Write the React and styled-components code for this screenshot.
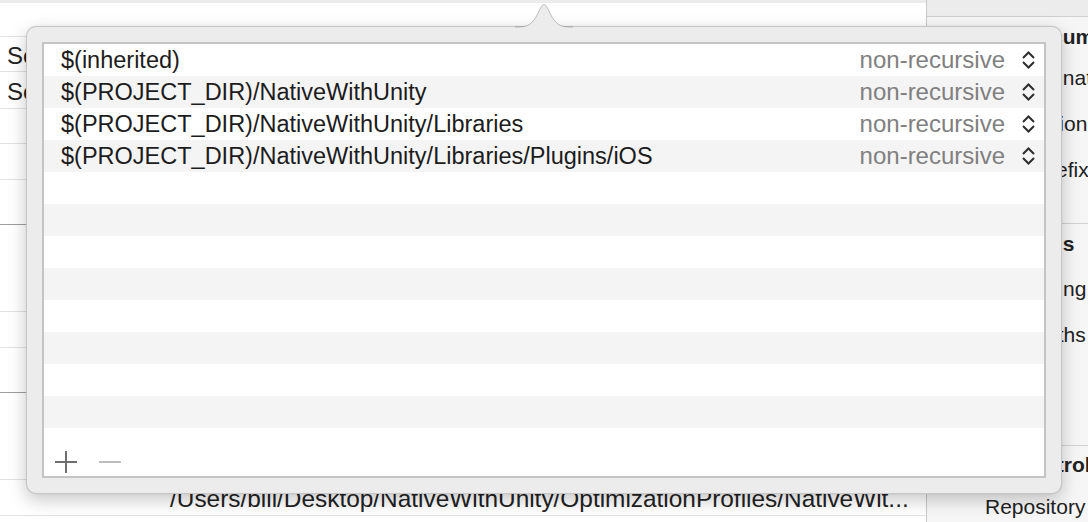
import React from "react";
import styled, { createGlobalStyle } from "styled-components";

const GlobalStyle = createGlobalStyle`
  html, body {
    margin: 0;
    padding: 0;
    width: 1088px;
    height: 522px;
    overflow: hidden;
    background: #ffffff;
    font-family: "Liberation Sans", Arial, sans-serif;
  }
`;

const Page = styled.div`
  position: relative;
  width: 1088px;
  height: 522px;
  display: grid;
  grid-template-columns: 927px 161px;
  overflow: hidden;
`;

const Editor = styled.div`
  display: flex;
  flex-direction: column;
  background: #ffffff;
  border-right: 1px solid #c8c8c8;
`;

const TopStrip = styled.div`
  height: 3px;
  background: #ececec;
  flex-shrink: 0;
`;

const EditorRow = styled.div`
  height: ${(p) => p.h}px;
  flex-shrink: 0;
  display: flex;
  align-items: center;
  box-sizing: border-box;
  border-bottom: 1px solid ${(p) => (p.dark ? "#9e9e9e" : "#e2e2e2")};
  font-size: ${(p) => (p.wide ? 24.4 : 24)}px;
  color: #222222;
`;

const RowLabel = styled.span`
  padding-left: ${(p) => p.indent}px;
  padding-top: 3px;
  white-space: nowrap;
`;

const Inspector = styled.div`
  display: flex;
  flex-direction: column;
  background: #f6f6f6;
  width: 200px;
`;

const InspectorTop = styled.div`
  height: 16px;
  flex-shrink: 0;
  background: #ececec;
  border-bottom: 1px solid #cfcfcf;
`;

const Section = styled.div`
  height: ${(p) => p.h}px;
  flex-shrink: 0;
  box-sizing: border-box;
  border-bottom: ${(p) => (p.last ? "none" : "1px solid #d2d2d2")};
  display: flex;
  flex-direction: column;
`;

const InspectorRow = styled.div`
  height: ${(p) => p.h}px;
  flex-shrink: 0;
  display: flex;
  align-items: center;
  padding-left: ${(p) => p.indent - 927}px;
  font-size: 21px;
  font-weight: ${(p) => (p.bold ? 700 : 400)};
  color: #222222;
  white-space: nowrap;
`;

const Popover = styled.div`
  position: absolute;
  left: 26px;
  top: 26px;
  width: 1036px;
  height: 468px;
  box-sizing: border-box;
  padding: 15px;
  background: #ececec;
  border: 1px solid rgba(0, 0, 0, 0.16);
  border-radius: 10px;
  box-shadow: 0 6px 18px rgba(0, 0, 0, 0.22), 0 0 2px rgba(0, 0, 0, 0.08);
`;

const Arrow = styled.svg`
  position: absolute;
  left: 488px;
  top: -25px;
  width: 58px;
  height: 27px;
  overflow: visible;
`;

const Table = styled.div`
  height: 100%;
  box-sizing: border-box;
  border: 2px solid #c4c4c4;
  background: #ffffff;
  display: flex;
  flex-direction: column;
`;

const PathRow = styled.div`
  height: 32px;
  flex-shrink: 0;
  display: flex;
  align-items: center;
  padding: 0 8px 0 17px;
  background: ${(p) => (p.odd ? "#f4f4f4" : "#ffffff")};
  font-size: 24px;
`;

const PathText = styled.span`
  flex: 1;
  font-size: 23.5px;
  color: #1c1c1c;
  white-space: nowrap;
`;

const Mode = styled.span`
  color: #808080;
  margin-right: 16px;
`;

const Footer = styled.div`
  flex: 1;
  display: flex;
  align-items: flex-end;
  gap: 22px;
  padding: 0 0 3px 11px;
`;

const IconButton = styled.svg`
  width: 22px;
  height: 22px;
  display: block;
`;

const UpDown = () => (
  <svg width="15" height="18" viewBox="0 0 15 18">
    <path d="M2 7 L7.5 1.5 L13 7" fill="none" stroke="#2e2e2e" strokeWidth="2" />
    <path d="M2 11 L7.5 16.5 L13 11" fill="none" stroke="#2e2e2e" strokeWidth="2" />
  </svg>
);

const paths = [
  "$(inherited)",
  "$(PROJECT_DIR)/NativeWithUnity",
  "$(PROJECT_DIR)/NativeWithUnity/Libraries",
  "$(PROJECT_DIR)/NativeWithUnity/Libraries/Plugins/iOS",
];

const editorRows = [
  { h: 34 },
  { h: 35, label: "Setting" },
  { h: 37, label: "Search Paths" },
  { h: 35 },
  { h: 36 },
  { h: 45, dark: true },
  { h: 87 },
  { h: 36 },
  { h: 45, dark: true },
  { h: 87 },
  { h: 36, path: "/Users/bill/Desktop/NativeWithUnity/OptimizationProfiles/NativeWit..." },
];

export default function App() {
  const rows = Array.from({ length: 12 }, (_, i) => paths[i] || null);
  return (
    <>
      <GlobalStyle />
      <Page>
        <Editor>
          <TopStrip />
          {editorRows.map((r, i) => (
            <EditorRow key={i} h={r.h} dark={r.dark} wide={!!r.path}>
              {r.label && <RowLabel indent={7}>{r.label}</RowLabel>}
              {r.path && <RowLabel indent={170}>{r.path}</RowLabel>}
            </EditorRow>
          ))}
        </Editor>

        <Inspector>
          <InspectorTop />
          <Section h={207}>
            <InspectorRow h={40} bold indent={1023}>Document</InspectorRow>
            <InspectorRow h={42} indent={1015}>Destination</InspectorRow>
            <InspectorRow h={50} indent={1008}>Location</InspectorRow>
            <InspectorRow h={42} indent={1035}>Prefix</InspectorRow>
          </Section>
          <Section h={222}>
            <InspectorRow h={40} bold indent={995}>Options</InspectorRow>
            <InspectorRow h={50} indent={1021}>Setting</InspectorRow>
            <InspectorRow h={42} indent={1032}>Paths</InspectorRow>
          </Section>
          <Section h={80} last>
            <InspectorRow h={38} bold indent={1016}>Control</InspectorRow>
            <InspectorRow h={46} indent={985}>Repository</InspectorRow>
          </Section>
        </Inspector>

        <Popover>
          <Arrow viewBox="0 0 58 27">
            <path
              d="M0 27 L0 25 C12 25 15 24 21 15 L26 5 Q29 0 32 5 L37 15 C43 24 46 25 58 25 L58 27 Z"
              fill="#ececec"
            />
            <path
              d="M0 25 C12 25 15 24 21 15 L26 5 Q29 0 32 5 L37 15 C43 24 46 25 58 25"
              fill="none"
              stroke="rgba(0,0,0,0.22)"
              strokeWidth="1"
            />
          </Arrow>
          <Table>
            {rows.map((p, i) => (
              <PathRow key={i} odd={i % 2 === 1}>
                {p && (
                  <>
                    <PathText>{p}</PathText>
                    <Mode>non-recursive</Mode>
                    <UpDown />
                  </>
                )}
              </PathRow>
            ))}
            <Footer>
              <IconButton viewBox="0 0 22 22">
                <path d="M0 11 H22 M11 0 V22" stroke="#6e6e6e" strokeWidth="2" />
              </IconButton>
              <IconButton viewBox="0 0 22 22">
                <path d="M0 11 H22" stroke="#bdbdbd" strokeWidth="2" />
              </IconButton>
            </Footer>
          </Table>
        </Popover>
      </Page>
    </>
  );
}
